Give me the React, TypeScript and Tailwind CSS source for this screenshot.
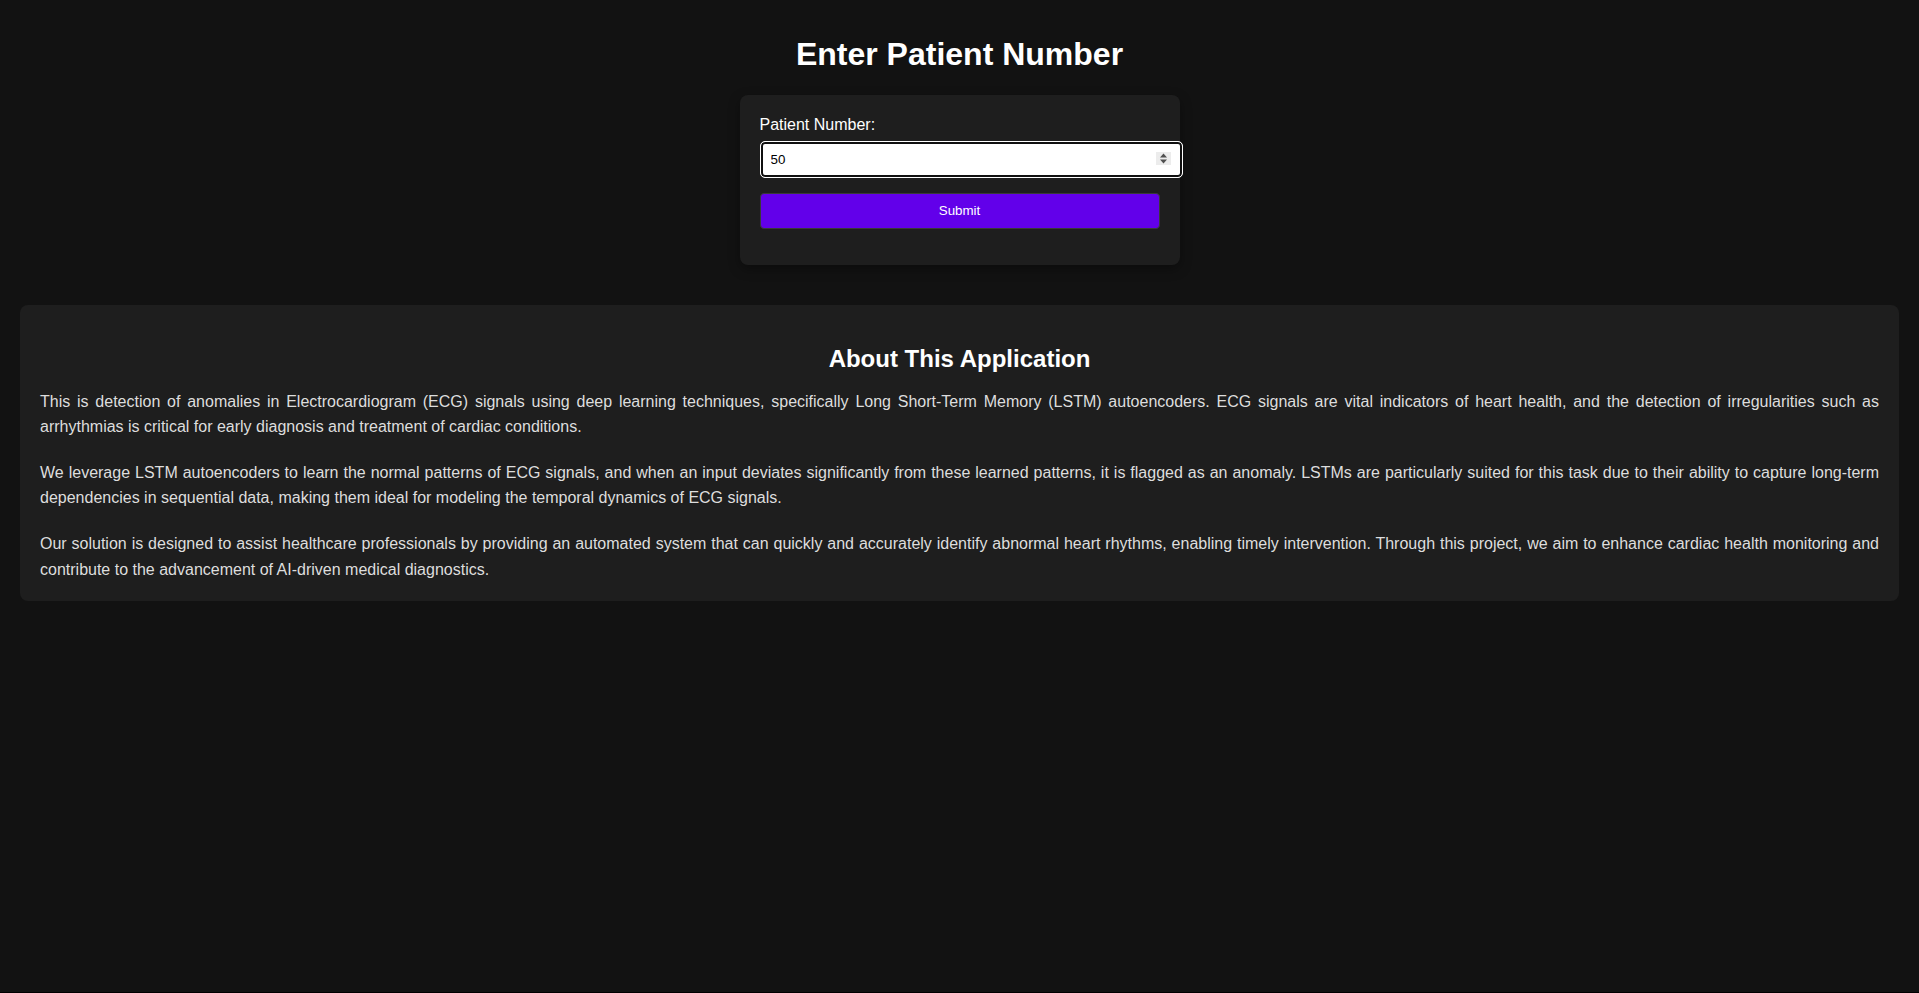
import React from "react";

export default function App() {
  return (
    <div className="bg-black h-[993px]">
      <div className="h-[992px] bg-[#121212] text-white font-['Liberation_Sans',Arial,sans-serif] pt-[36px]">
        <h1 className="text-[32px] font-bold text-center leading-[37px] m-0">Enter Patient Number</h1>
        <div className="w-[440px] mx-auto mt-[22px] rounded-lg bg-[#1e1e1e] px-5 pt-5 pb-9 shadow-[0_4px_12px_rgba(0,0,0,0.35)]">
          <label className="block text-base leading-[18px] mt-[1px] mb-[7px]">Patient Number:</label>
          <div className="relative w-[423px] h-[37px]">
            <input
              type="text"
              defaultValue="50"
              className="w-[423px] h-[37px] bg-white text-black border border-white rounded-[5px] shadow-[inset_0_0_0_2px_#101010] px-[10px] text-[13.33px] outline-none font-['Liberation_Sans',Arial,sans-serif]"
            />
            <div className="absolute right-[12px] top-[11px] w-[15px] h-[13px] bg-[#ececec] flex items-center justify-center">
              <svg width="9" height="11" viewBox="0 0 9 11">
                <path d="M4.5 0.5 L8 4.5 L1 4.5 Z" fill="#505050" />
                <path d="M4.5 10.5 L8 6.5 L1 6.5 Z" fill="#505050" />
              </svg>
            </div>
          </div>
          <button className="mt-[15px] w-[400px] h-[36px] bg-[#6200ea] rounded-[4px] border border-[#3a3a3a] text-white text-[13.33px] font-normal flex items-center justify-center">
            Submit
          </button>
        </div>
        <div className="mx-5 mt-10 rounded-lg bg-[#1e1e1e] p-5 pb-[19px]">
          <h2 className="text-2xl font-bold text-center text-white leading-[27.6px] mt-5 mb-4">About This Application</h2>
          <p className="text-base leading-[25.6px] text-[#dddddd] text-justify mb-5">
            This is detection of anomalies in Electrocardiogram (ECG) signals using deep learning techniques, specifically Long Short-Term Memory (LSTM) autoencoders. ECG signals are vital indicators of heart health, and the detection of irregularities such as arrhythmias is critical for early diagnosis and treatment of cardiac conditions.
          </p>
          <p className="text-base leading-[25.6px] text-[#dddddd] text-justify mb-5">
            We leverage LSTM autoencoders to learn the normal patterns of ECG signals, and when an input deviates significantly from these learned patterns, it is flagged as an anomaly. LSTMs are particularly suited for this task due to their ability to capture long-term dependencies in sequential data, making them ideal for modeling the temporal dynamics of ECG signals.
          </p>
          <p className="text-base leading-[25.6px] text-[#dddddd] text-justify">
            Our solution is designed to assist healthcare professionals by providing an automated system that can quickly and accurately identify abnormal heart rhythms, enabling timely intervention. Through this project, we aim to enhance cardiac health monitoring and contribute to the advancement of AI-driven medical diagnostics.
          </p>
        </div>
      </div>
    </div>
  );
}
